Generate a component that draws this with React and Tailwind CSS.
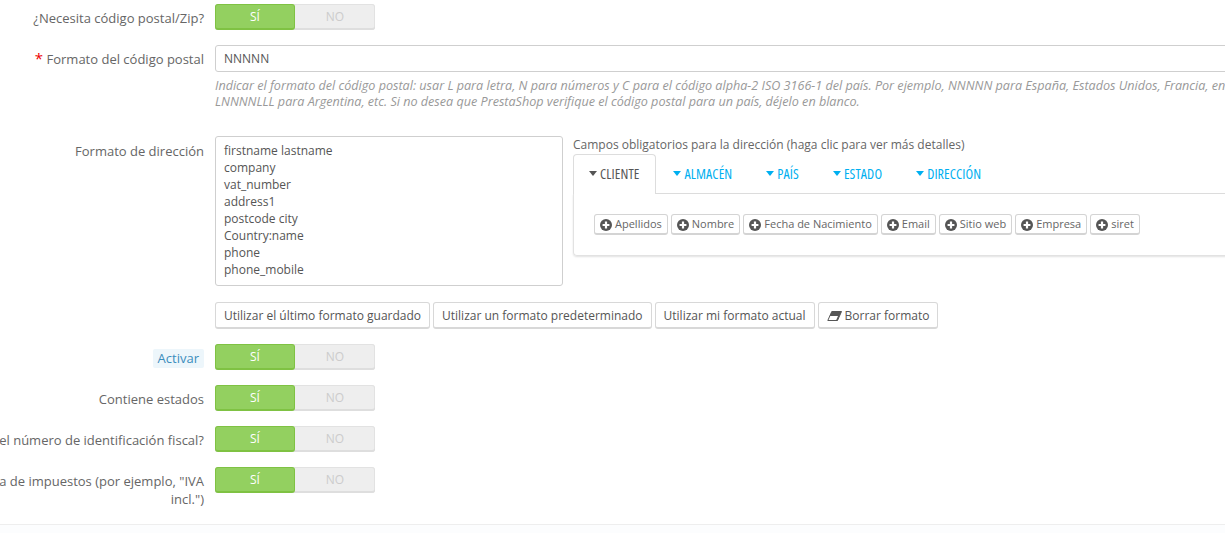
import { useState } from 'react';

const Caret = ({ className }) => (
  <svg width="8" height="5" viewBox="0 0 8 5" className={className}>
    <path d="M0 0h8L4 5z" fill="currentColor" />
  </svg>
);

const PlusCircle = () => (
  <svg width="12" height="12" viewBox="0 0 13 13" className="shrink-0 text-[#555]">
    <circle cx="6.5" cy="6.5" r="6.5" fill="currentColor" />
    <path d="M5.3 2.8h2.4v2.5h2.5v2.4H7.7v2.5H5.3V7.7H2.8V5.3h2.5z" fill="#fff" />
  </svg>
);

const Eraser = () => (
  <svg width="15" height="10" viewBox="0 0 15 10" className="shrink-0 text-[#555]">
    <path d="M4.8 0.5H14.5L10.5 9.5H0.8z" fill="#fff" stroke="currentColor" strokeWidth="1" strokeLinejoin="round" />
    <path d="M4.8 0.5H14.5L10.5 9.5H9L11 5H2.8z" fill="currentColor" />
  </svg>
);

const Toggle = () => (
  <div className="flex w-[160px] h-[26px] rounded-[3px] bg-[#eeeeee] shadow-[inset_0_-2px_0_#dedede,inset_0_0_0_1px_#e2e2e2] text-[12px]">
    <span className="w-[80px] flex items-center justify-center rounded-[3px] bg-[#93d060] border border-[#7fc243] border-b-2 text-white">
      SÍ
    </span>
    <span className="w-[80px] flex items-center justify-center text-[#cccccc]">NO</span>
  </div>
);

const Row = ({ label, className = '', labelClass = 'pt-[5px]', children }) => (
  <div className={`flex ${className}`}>
    <div className={`w-[360px] shrink-0 pr-[11px] text-right text-[13px] leading-[18px] ${labelClass}`}>{label}</div>
    <div className="min-w-0">{children}</div>
  </div>
);

const TABS = ['CLIENTE', 'ALMACÉN', 'PAÍS', 'ESTADO', 'DIRECCIÓN'];
const FIELDS = ['Apellidos', 'Nombre', 'Fecha de Nacimiento', 'Email', 'Sitio web', 'Empresa', 'siret'];
const FORMAT = `firstname lastname
company
vat_number
address1
postcode city
Country:name
phone
phone_mobile`;

const ACTIONS = ['Utilizar el último formato guardado', 'Utilizar un formato predeterminado', 'Utilizar mi formato actual'];

const btn =
  'h-[27px] px-[8px] pt-[1px] flex items-center whitespace-nowrap rounded-[3px] border border-[#d8d8d8] border-b-2 bg-white text-[12px] text-[#555]';

export default function App() {
  const [tab] = useState('CLIENTE');

  return (
    <div className="h-[533px] overflow-hidden bg-white text-[12px] text-[#666] font-['Open_Sans',sans-serif]">
      <div className="w-[1550px] ml-[-145px] pt-[4px]">
        <Row label="¿Necesita código postal/Zip?" className="mb-[15px]">
          <Toggle />
        </Row>

        <Row
          label={
            <>
              <span className="text-[#e00] text-[15px] leading-none">*</span> Formato del código postal
            </>
          }
          className="mb-[26px]"
        >
          <div className="w-[1100px] h-[27px] flex items-center px-[8px] rounded-[3px] border border-[#cfcfcf] text-[#555]">
            NNNNN
          </div>
          <p className="mt-[6px] text-[12.6px] leading-[16px] italic text-[#999] whitespace-nowrap">
            Indicar el formato del código postal: usar L para letra, N para números y C para el código alpha-2 ISO 3166-1 del país. Por ejemplo, NNNNN para España, Estados Unidos, Francia, entre otros
            <br />
            LNNNNLLL para Argentina, etc. Si no desea que PrestaShop verifique el código postal para un país, déjelo en blanco.
          </p>
        </Row>

        <Row label="Formato de dirección" labelClass="pt-[6px]" className="mb-[16px]">
          <div className="flex">
            <textarea
              readOnly
              defaultValue={FORMAT}
              className="w-[348px] h-[150px] shrink-0 resize-none overflow-hidden px-[8px] py-[5px] leading-[17px] rounded-[3px] border border-[#cfcfcf] text-[#555] outline-none"
            />
            <div className="ml-[10px] w-[800px]">
              <div className="h-[18px] leading-[18px] whitespace-nowrap">
                Campos obligatorios para la dirección (haga clic para ver más detalles)
              </div>
              <div className="flex h-[40px] border-b border-[#dddddd] text-[14px] tracking-[0.1px] [font-stretch:75%]">
                {TABS.map((t) => (
                  <div
                    key={t}
                    className={`flex items-center gap-[3px] pr-[16px] pb-[2px] border border-b-0 rounded-t-[4px] h-[40px] ${
                      t === tab ? 'pl-[15px] border-[#dddddd] bg-white text-[#555]' : 'pl-[16px] border-transparent text-[#00aff0]'
                    }`}
                  >
                    <Caret />
                    {t}
                  </div>
                ))}
              </div>
              <div className="flex gap-[3px] h-[62px] px-[20px] pt-[20px] rounded-b-[4px] border border-t-0 border-[#e2e2e2] shadow-[0_1px_2px_rgba(0,0,0,0.12)]">
                {FIELDS.map((f) => (
                  <div
                    key={f}
                    className="h-[21px] px-[5px] pt-[1px] flex items-center gap-[3px] whitespace-nowrap rounded-[3px] border border-[#d4d4d4] border-b-2 text-[11px] text-[#666]"
                  >
                    <PlusCircle />
                    {f}
                  </div>
                ))}
              </div>
            </div>
          </div>
        </Row>

        <Row label="" className="mb-[15px]">
          <div className="flex gap-[3px]">
            {ACTIONS.map((a) => (
              <div key={a} className={btn}>
                {a}
              </div>
            ))}
            <div className={`${btn} gap-[3px]`}>
              <Eraser />
              Borrar formato
            </div>
          </div>
        </Row>

        <Row
          label={
            <span className="inline-block px-[5px] rounded-[2px] bg-[#edf6fb] text-[#3b8dbd] leading-[19px]">
              Activar
            </span>
          }
          className="mb-[15px]"
        >
          <Toggle />
        </Row>
        <Row label="Contiene estados" className="mb-[15px]">
          <Toggle />
        </Row>
        <Row label="¿Necesita el número de identificación fiscal?" className="mb-[15px]">
          <Toggle />
        </Row>
        <Row label='¿Mostrar la etiqueta de impuestos (por ejemplo, "IVA incl.")' className="mb-[16px]">
          <Toggle />
        </Row>
      </div>
      <div className="h-[20px] border-t border-[#eeeeee] bg-[#fcfdfe]" />
    </div>
  );
}
